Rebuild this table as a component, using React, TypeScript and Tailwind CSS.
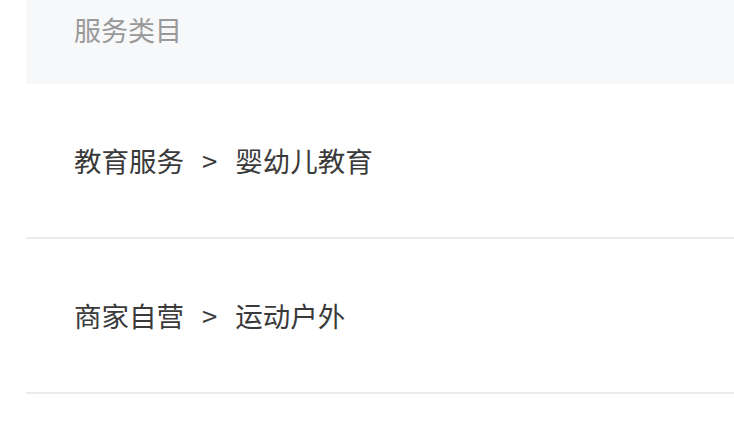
export default function App() {
  const rows = [
    { parent: "教育服务", child: "婴幼儿教育" },
    { parent: "商家自营", child: "运动户外" },
  ];

  return (
    <div
      className="min-h-screen w-full bg-white pl-[26px]"
      style={{ fontFamily: '"Noto Sans CJK SC", "Noto Sans", sans-serif' }}
    >
      <div className="flex h-[84px] items-start bg-[#f7f8fa] pl-[48px] pt-[12px]">
        <span className="text-[27px] leading-[36px] text-[#999999]">服务类目</span>
      </div>
      {rows.map((row) => (
        <div
          key={row.parent}
          className="flex h-[155px] items-center border-b-2 border-[#ebebeb] pl-[48px] text-[27.5px] text-[#3a3a3a]"
        >
          <span>{row.parent}</span>
          <span className="mx-[18px]">&gt;</span>
          <span>{row.child}</span>
        </div>
      ))}
    </div>
  );
}
